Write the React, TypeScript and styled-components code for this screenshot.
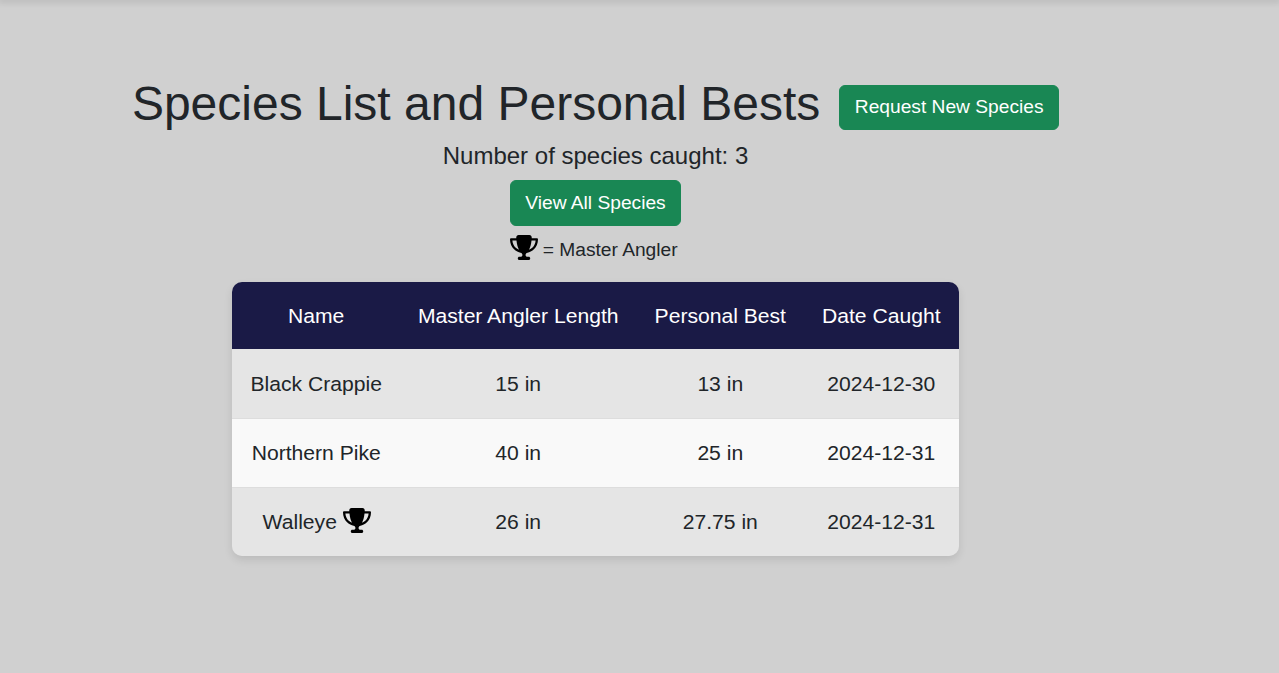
import { createGlobalStyle, styled } from "styled-components";
import { FaTrophy } from "react-icons/fa6";

const species = [
  { name: "Black Crappie", master: "15 in", best: "13 in", date: "2024-12-30" },
  { name: "Northern Pike", master: "40 in", best: "25 in", date: "2024-12-31" },
  { name: "Walleye", master: "26 in", best: "27.75 in", date: "2024-12-31", trophy: true },
];

const App = () => {
  return (
    <>
      <GlobalStyle />
      <TopShadow />
      <Page>
        <Heading>
          <Title>Species List and Personal Bests</Title>
          <GreenButton $small>Request New Species</GreenButton>
        </Heading>
        <Count>Number of species caught: 3</Count>
        <GreenButton>View All Species</GreenButton>
        <Legend>
          <Trophy /> = Master Angler
        </Legend>
        <TableCard>
          <Table>
            <thead>
              <tr>
                <HeadCell>Name</HeadCell>
                <HeadCell>Master Angler Length</HeadCell>
                <HeadCell>Personal Best</HeadCell>
                <HeadCell>Date Caught</HeadCell>
              </tr>
            </thead>
            <tbody>
              {species.map((row) => (
                <Row key={row.name}>
                  <Cell>
                    {row.name}
                    {row.trophy && (
                      <>
                        {" "}
                        <Trophy />
                      </>
                    )}
                  </Cell>
                  <Cell>{row.master}</Cell>
                  <Cell>{row.best}</Cell>
                  <Cell>{row.date}</Cell>
                </Row>
              ))}
            </tbody>
          </Table>
        </TableCard>
      </Page>
    </>
  );
};

const GlobalStyle = createGlobalStyle`
  body {
    margin: 0;
    background: #d0d0d0;
    color: #212529;
    font-family: "Liberation Sans", Arial, sans-serif;
  }
`;

const TopShadow = styled.div`
  height: 0;
  box-shadow: 0 0 6px 2px rgba(0, 0, 0, 0.15);
`;

const Page = styled.main`
  width: 1191px;
  min-height: 673px;
  padding-top: 75px;
  box-sizing: border-box;
  display: flex;
  flex-direction: column;
  align-items: center;
`;

const Heading = styled.div`
  display: flex;
  align-items: center;
  gap: 19px;
`;

const Title = styled.h1`
  margin: 0;
  font-size: 48px;
  font-weight: 400;
  line-height: 57.6px;
`;

const GreenButton = styled.button<{ $small?: boolean }>`
  border: 1px solid #198754;
  border-radius: 6px;
  background: #198754;
  color: #fff;
  font-family: inherit;
  font-size: 19.2px;
  line-height: 28px;
  padding: ${(p) => (p.$small ? "7px 14.5px 8px" : "8px 14.5px")};
  margin-top: ${(p) => (p.$small ? "8px" : "0")};
`;

const Count = styled.div`
  font-size: 24px;
  line-height: 36px;
  margin-top: 5px;
  margin-bottom: 6px;
`;

const Legend = styled.div`
  font-size: 19.2px;
  line-height: 29px;
  margin-top: 9px;
  margin-bottom: 18px;
  padding-right: 3px;
  white-space: nowrap;
`;

const Trophy = styled(FaTrophy)`
  width: 28px;
  height: 25px;
  margin: -5px -1px 0 0;
  color: #000;
  vertical-align: -4px;
`;

const TableCard = styled.div`
  border-radius: 10px;
  overflow: hidden;
  box-shadow: 0 4px 8px rgba(0, 0, 0, 0.1);
`;

const Table = styled.table`
  border-collapse: separate;
  border-spacing: 0;
  font-size: 21.12px;
  text-align: center;
`;

const HeadCell = styled.th`
  background: #1a1a46;
  color: #fff;
  font-weight: 400;
  height: 66px;
  padding: 1px 18px 0;
`;

const Cell = styled.td`
  height: 68px;
  padding: 0 18px;
  border-top: 1px solid #ddd;
`;

const Row = styled.tr`
  background: #f9f9f9;

  &:nth-child(odd) {
    background: #e5e5e5;
  }

  &:first-child ${Cell} {
    border-top-color: transparent;
  }
`;

export default App;
